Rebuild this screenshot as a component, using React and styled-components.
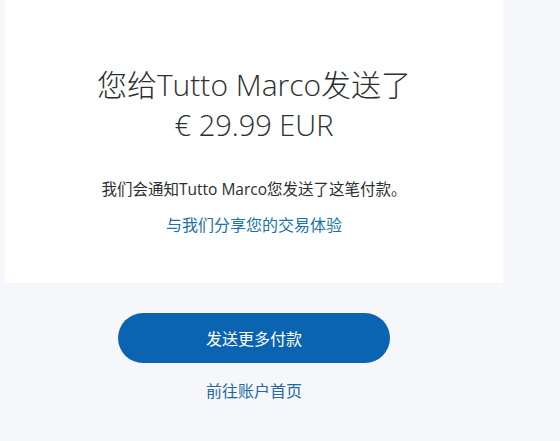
import styled, { createGlobalStyle } from "styled-components";

const GlobalStyle = createGlobalStyle`
  html, body {
    margin: 0;
    padding: 0;
    background: #f5f7fa;
    font-family: "Open Sans", "Noto Sans CJK SC", sans-serif;
  }
`;

const Page = styled.div`
  width: 498px;
  margin-left: 5px;
  display: flex;
  flex-direction: column;
  align-items: center;
`;

const Card = styled.div`
  width: 100%;
  background: #ffffff;
  padding: 65px 0 46px;
  box-sizing: border-box;
  display: flex;
  flex-direction: column;
  align-items: center;
  text-align: center;
`;

const Title = styled.h1`
  margin: 0;
  font-size: 30px;
  line-height: 40px;
  font-weight: 300;
  color: #2c2e2f;
`;

const Amount = styled.div`
  font-size: 29px;
  line-height: 40px;
  font-weight: 300;
  color: #2c2e2f;
`;

const Message = styled.p`
  margin: 33px 0 0;
  font-size: 15.5px;
  line-height: 22px;
  color: #2c2e2f;
`;

const TextLink = styled.a`
  display: block;
  margin-top: ${(props) => props.$top || 0}px;
  font-size: ${(props) => props.$size || 16}px;
  line-height: 24px;
  color: ${(props) => props.$color || "#0070ba"};
  text-decoration: none;
  cursor: pointer;
`;

const PrimaryButton = styled.button`
  margin-top: 30px;
  width: 272px;
  height: 50px;
  border: none;
  border-radius: 25px;
  background: #0a64b1;
  color: #ffffff;
  font-family: inherit;
  font-size: 16px;
  cursor: pointer;
`;

const App = () => {
  return (
    <>
      <GlobalStyle />
      <Page>
        <Card>
          <Title>您给Tutto Marco发送了</Title>
          <Amount>€ 29.99 EUR</Amount>
          <Message>我们会通知Tutto Marco您发送了这笔付款。</Message>
          <TextLink $top={13} $size={16} $color="#1b72b0">
            与我们分享您的交易体验
          </TextLink>
        </Card>
        <PrimaryButton>发送更多付款</PrimaryButton>
        <TextLink $top={16} $size={16} $color="#25679f">
          前往账户首页
        </TextLink>
      </Page>
    </>
  );
};

export default App;
